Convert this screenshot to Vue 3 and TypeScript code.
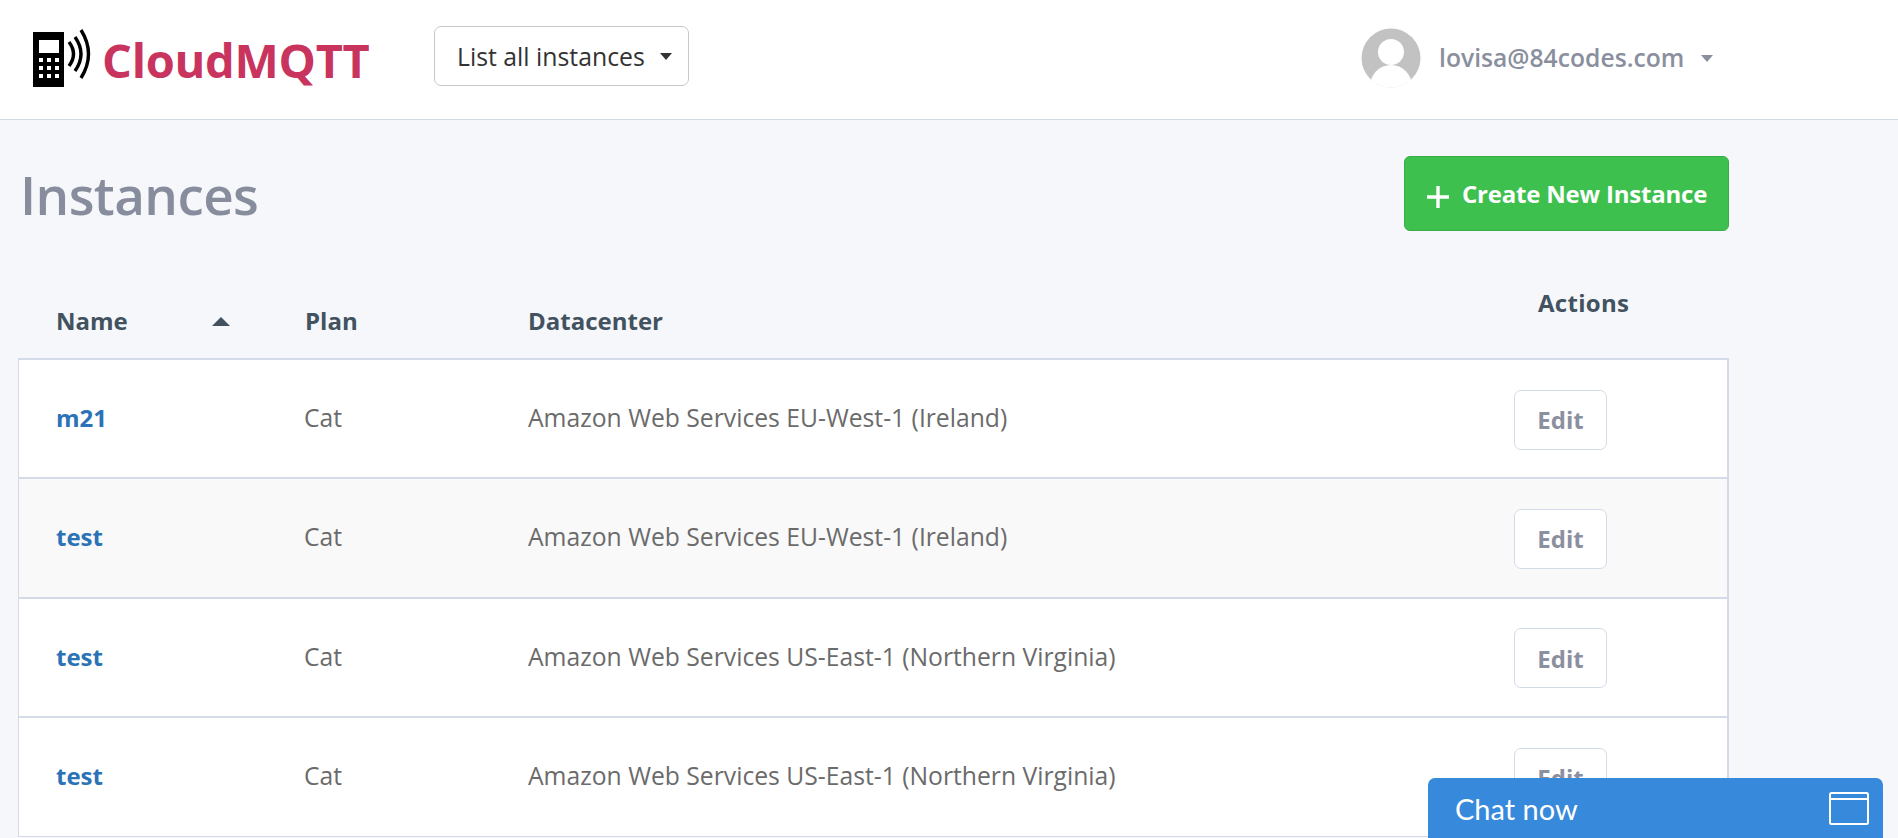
<script setup lang="ts">
interface Row { name: string; plan: string; dc: string }
const rows: Row[] = [
  { name: 'm21', plan: 'Cat', dc: 'Amazon Web Services EU-West-1 (Ireland)' },
  { name: 'test', plan: 'Cat', dc: 'Amazon Web Services EU-West-1 (Ireland)' },
  { name: 'test', plan: 'Cat', dc: 'Amazon Web Services US-East-1 (Northern Virginia)' },
  { name: 'test', plan: 'Cat', dc: 'Amazon Web Services US-East-1 (Northern Virginia)' },
]
</script>

<template>
  <div class="page">
    <header class="topbar">
      <div class="brand">
        <svg class="logo" width="60" height="60" viewBox="0 0 60 60">
          <rect x="2" y="3" width="31" height="55" fill="#000" />
          <rect x="8" y="11" width="20" height="13" fill="#fff" />
          <g fill="#fff">
            <rect x="8" y="29" width="4" height="4" /><rect x="16" y="29" width="4" height="4" /><rect x="24" y="29" width="4" height="4" />
            <rect x="8" y="37" width="4" height="4" /><rect x="16" y="37" width="4" height="4" /><rect x="24" y="37" width="4" height="4" />
            <rect x="8" y="45" width="4" height="4" /><rect x="16" y="45" width="4" height="4" /><rect x="24" y="45" width="4" height="4" />
          </g>
          <g fill="none" stroke="#000" stroke-width="3.4">
            <path d="M38 13 Q47 25 38 37" />
            <path d="M44 8 Q56 25 44 42" />
            <path d="M50 1 Q65 25 50 49" />
          </g>
        </svg>
        <span class="wordmark">CloudMQTT</span>
      </div>
      <button class="select">
        <span>List all instances</span>
        <i class="caret dark"></i>
      </button>
      <div class="user">
        <svg class="avatar" width="60" height="60" viewBox="0 0 60 60">
          <defs>
            <clipPath id="avatar-clip"><circle cx="30" cy="30" r="29.5" /></clipPath>
          </defs>
          <circle cx="30" cy="30" r="29.5" fill="#c2c2c2" />
          <g clip-path="url(#avatar-clip)" fill="#fff">
            <circle cx="30" cy="24" r="13" />
            <circle cx="30" cy="58" r="21" />
            <rect x="0" y="52" width="60" height="8" />
          </g>
        </svg>
        <span class="email">lovisa@84codes.com</span>
        <i class="caret muted"></i>
      </div>
    </header>

    <main class="content">
      <div class="title-row">
        <h1>Instances</h1>
        <button class="create">
          <svg class="plus" width="22" height="24" viewBox="0 0 22 24"><path d="M0 12H22M11 1V23" stroke="#fff" stroke-width="3.4" /></svg>
          <span>Create New Instance</span>
        </button>
      </div>
      <div class="table">
        <div class="thead">
          <div class="th name-head"><span>Name</span><i class="sort"></i></div>
          <div class="th">Plan</div>
          <div class="th">Datacenter</div>
          <div class="th actions-head">Actions</div>
        </div>
        <div class="tbody">
          <div v-for="(row, i) in rows" :key="i" class="tr">
            <a class="name" href="#">{{ row.name }}</a>
            <span class="cell">{{ row.plan }}</span>
            <span class="cell">{{ row.dc }}</span>
            <div class="action-cell"><button class="edit">Edit</button></div>
          </div>
        </div>
      </div>
    </main>

    <div class="chat">
      <span>Chat now</span>
      <svg width="40" height="33" viewBox="0 0 40 33" fill="none" stroke="#fff" stroke-width="2">
        <rect x="1" y="1" width="38" height="31" rx="1.5" />
        <path d="M1 7H39" />
      </svg>
    </div>
  </div>
</template>

<style>
html, body { margin: 0; height: 100%; overflow: hidden; background: #f5f7fb; }
</style>

<style scoped>
.page {
  font-family: "Open Sans", "Noto Sans", sans-serif;
  height: 838px;
  overflow: hidden;
  background: #f5f7fb;
  color: #6b6b6b;
}
.topbar {
  box-sizing: border-box;
  height: 120px;
  background: #fff;
  border-bottom: 1px solid #d3dae8;
  display: flex;
  align-items: center;
  padding-left: 31px;
}
.brand { display: flex; align-items: center; width: 403px; }
.logo { margin-top: -2px; }
.wordmark {
  margin-left: 11px;
  font-size: 47px;
  font-weight: 700;
  letter-spacing: -0.3px;
  color: #c9345f;
}
.select {
  box-sizing: border-box;
  width: 255px;
  height: 60px;
  display: flex;
  align-items: center;
  padding: 0 16px 0 22px;
  justify-content: space-between;
  background: #fff;
  border: 1px solid #c8c8c8;
  border-radius: 7px;
  font: inherit;
  font-size: 24.8px;
  color: #333;
  margin-top: -7px;
}
.caret {
  display: block;
  width: 0;
  height: 0;
  border-left: 6.5px solid transparent;
  border-right: 6.5px solid transparent;
}
.caret.dark { border-top: 7px solid #333; }
.caret.muted { border-top: 7px solid #8a8f9e; margin-left: 17px; margin-top: 2px; }
.user { display: flex; align-items: center; margin-left: 672px; margin-top: -4px; }
.email {
  margin-left: 18px;
  font-size: 24.7px;
  font-weight: 600;
  color: #8a8f9e;
}
.content { width: 1711px; margin-left: 18px; }
.title-row {
  display: flex;
  justify-content: space-between;
  align-items: flex-start;
  padding-top: 36px;
}
h1 {
  margin: 0 0 0 2px;
  font-size: 53px;
  line-height: 77px;
  height: 75px;
  font-weight: 600;
  letter-spacing: -0.6px;
  color: #878d9c;
}
.create {
  box-sizing: border-box;
  width: 325px;
  height: 75px;
  display: flex;
  align-items: center;
  gap: 13px;
  padding: 0 0 0 22px;
  background: #3ec04f;
  border: 1px solid #38ad47;
  border-radius: 6px;
  font: inherit;
  font-size: 24px;
  font-weight: 700;
  letter-spacing: -0.2px;
  color: #fff;
}
.plus { margin-top: 6px; }
.thead, .tr {
  display: grid;
}
.thead {
  grid-template-columns: 287px 223px 986px 1fr;
  height: 127px;
  align-items: end;
  padding-bottom: 21px;
  box-sizing: border-box;
}
.tr { grid-template-columns: 285px 224px 986px 1fr; }
.th {
  font-size: 24px;
  font-weight: 700;
  line-height: 32px;
  color: #43525f;
}
.name-head {
  box-sizing: border-box;
  padding-left: 38px;
  padding-right: 75px;
  display: flex;
  align-items: center;
  justify-content: space-between;
}
.sort {
  display: block;
  width: 0;
  height: 0;
  border-left: 9px solid transparent;
  border-right: 9px solid transparent;
  border-bottom: 9px solid #43525f;
}
.actions-head { margin-bottom: 18px; padding-left: 24px; letter-spacing: 0.3px; }
.tbody {
  border-left: 1px solid #d3dae8;
  border-right: 2px solid #d3dae8;
}
.tr {
  box-sizing: border-box;
  height: 119.3px;
  align-items: center;
  background: #fff;
  border-top: 2px solid #d3dae8;
  font-size: 24.7px;
}
.tr:last-child { height: 120.8px; border-bottom: 1px solid #d3dae8; }
.tr:nth-child(2) { background: #f9f9fa; }
.name, .cell { margin-bottom: 2px; }
.name {
  padding-left: 37px;
  font-size: 24px;
  font-weight: 700;
  color: #2b72b7;
  text-decoration: none;
}
.action-cell { display: flex; }
.edit {
  box-sizing: border-box;
  width: 93px;
  height: 60px;
  margin-top: 2px;
  background: #fff;
  border: 1px solid #d3dae8;
  border-radius: 7px;
  font: inherit;
  font-size: 24px;
  font-weight: 700;
  color: #8b90a0;
}
.chat {
  position: fixed;
  left: 1428px;
  top: 778px;
  box-sizing: border-box;
  width: 455px;
  height: 60px;
  display: flex;
  align-items: flex-start;
  justify-content: space-between;
  padding: 14px 14px 0 27px;
  background: #3689db;
  border-radius: 7px 7px 0 0;
  font-family: Lato, sans-serif;
  font-size: 29px;
  line-height: 34px;
  color: #fff;
}
</style>
